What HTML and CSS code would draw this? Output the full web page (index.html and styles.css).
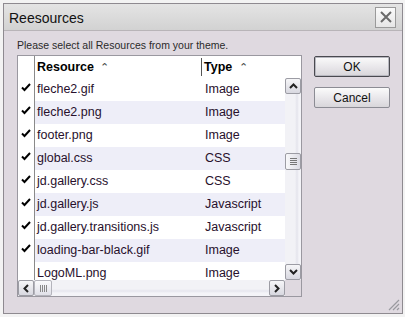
FILE: index.html
```html
<!DOCTYPE html>
<html lang="en">
<head>
    <meta charset="UTF-8">
    <title>Reesources</title>
    <link rel="stylesheet" href="styles.css">
</head>
<body>
    <div class="window">
        <div class="titlebar">
            <span class="title">Reesources</span>
            <button class="close-btn" aria-label="Close">
                <svg width="12" height="12" viewBox="0 0 12 12"><path d="M1 1 L11 11 M11 1 L1 11" stroke="#6a6a6a" stroke-width="2"/></svg>
            </button>
        </div>
        <div class="content">
            <p class="hint">Please select all Resources from your theme.</p>
            <div class="main">
                <div class="listbox">
                    <div class="list-header">
                        <div class="col-check"></div>
                        <div class="col-name">Resource <span class="sort">&#8963;</span></div>
                        <div class="col-type">Type <span class="sort">&#8963;</span></div>
                    </div>
                    <div class="list-body">
                        <div class="rows">
                            <div class="row"><div class="col-check"><svg class="tick" width="10" height="9" viewBox="0 0 10 9"><path d="M1 4.5 L3.5 7 L9 1" fill="none" stroke="#000" stroke-width="2"/></svg></div><div class="col-name">fleche2.gif</div><div class="col-type">Image</div></div>
                            <div class="row"><div class="col-check"><svg class="tick" width="10" height="9" viewBox="0 0 10 9"><path d="M1 4.5 L3.5 7 L9 1" fill="none" stroke="#000" stroke-width="2"/></svg></div><div class="col-name">fleche2.png</div><div class="col-type">Image</div></div>
                            <div class="row"><div class="col-check"><svg class="tick" width="10" height="9" viewBox="0 0 10 9"><path d="M1 4.5 L3.5 7 L9 1" fill="none" stroke="#000" stroke-width="2"/></svg></div><div class="col-name">footer.png</div><div class="col-type">Image</div></div>
                            <div class="row"><div class="col-check"><svg class="tick" width="10" height="9" viewBox="0 0 10 9"><path d="M1 4.5 L3.5 7 L9 1" fill="none" stroke="#000" stroke-width="2"/></svg></div><div class="col-name">global.css</div><div class="col-type">CSS</div></div>
                            <div class="row"><div class="col-check"><svg class="tick" width="10" height="9" viewBox="0 0 10 9"><path d="M1 4.5 L3.5 7 L9 1" fill="none" stroke="#000" stroke-width="2"/></svg></div><div class="col-name">jd.gallery.css</div><div class="col-type">CSS</div></div>
                            <div class="row"><div class="col-check"><svg class="tick" width="10" height="9" viewBox="0 0 10 9"><path d="M1 4.5 L3.5 7 L9 1" fill="none" stroke="#000" stroke-width="2"/></svg></div><div class="col-name">jd.gallery.js</div><div class="col-type">Javascript</div></div>
                            <div class="row"><div class="col-check"><svg class="tick" width="10" height="9" viewBox="0 0 10 9"><path d="M1 4.5 L3.5 7 L9 1" fill="none" stroke="#000" stroke-width="2"/></svg></div><div class="col-name">jd.gallery.transitions.js</div><div class="col-type">Javascript</div></div>
                            <div class="row"><div class="col-check"><svg class="tick" width="10" height="9" viewBox="0 0 10 9"><path d="M1 4.5 L3.5 7 L9 1" fill="none" stroke="#000" stroke-width="2"/></svg></div><div class="col-name">loading-bar-black.gif</div><div class="col-type">Image</div></div>
                            <div class="row"><div class="col-check"></div><div class="col-name">LogoML.png</div><div class="col-type">Image</div></div>
                        </div>
                        <div class="vscroll">
                            <div class="sb-btn">
                                <svg width="9" height="6" viewBox="0 0 9 6"><path d="M1 5 L4.5 1.5 L8 5" fill="none" stroke="#222" stroke-width="2"/></svg>
                            </div>
                            <div class="vtrack">
                                <div class="vthumb">
                                    <svg width="7" height="7" viewBox="0 0 7 7"><path d="M0 0.5 H7 M0 2.5 H7 M0 4.5 H7 M0 6.5 H7" stroke="#777" stroke-width="1"/></svg>
                                </div>
                            </div>
                            <div class="sb-btn">
                                <svg width="9" height="6" viewBox="0 0 9 6"><path d="M1 1 L4.5 4.5 L8 1" fill="none" stroke="#222" stroke-width="2"/></svg>
                            </div>
                        </div>
                    </div>
                    <div class="hscroll">
                        <div class="sb-btn">
                            <svg width="6" height="9" viewBox="0 0 6 9"><path d="M5 1 L1.5 4.5 L5 8" fill="none" stroke="#222" stroke-width="2"/></svg>
                        </div>
                        <div class="htrack">
                            <div class="hthumb">
                                <svg width="7" height="7" viewBox="0 0 7 7"><path d="M0.5 0 V7 M2.5 0 V7 M4.5 0 V7 M6.5 0 V7" stroke="#888" stroke-width="1"/></svg>
                            </div>
                        </div>
                        <div class="sb-btn">
                            <svg width="6" height="9" viewBox="0 0 6 9"><path d="M1 1 L4.5 4.5 L1 8" fill="none" stroke="#222" stroke-width="2"/></svg>
                        </div>
                        <div class="corner"></div>
                    </div>
                </div>
                <div class="actions">
                    <button class="btn btn-default">OK</button>
                    <button class="btn">Cancel</button>
                </div>
            </div>
            <svg class="grip" width="14" height="14" viewBox="0 0 14 14">
                <path d="M13 3 L3 13 M13 7 L7 13 M13 11 L11 13" stroke="#9a9aa0" stroke-width="1.2"/>
            </svg>
        </div>
    </div>
</body>
</html>
```

FILE: styles.css
```css
* {
    box-sizing: border-box;
    margin: 0;
    padding: 0;
}

body {
    background-color: #f3f3f3;
    font-family: "Liberation Sans", Arial, sans-serif;
    padding: 3px;
}

.window {
    width: 400px;
    height: 311px;
    border: 1px solid #8e8a90;
    background-color: #dfd9e0;
    display: flex;
    flex-direction: column;
}

.titlebar {
    height: 27px;
    display: flex;
    align-items: center;
    justify-content: space-between;
    padding: 0 6px 0 5px;
    background: linear-gradient(#e4e4e4, #d2d2d2);
    border-bottom: 1px solid #b8b4b8;
}

.title {
    font-size: 14px;
    color: #111;
    padding-top: 1px;
}

.close-btn {
    width: 21px;
    height: 21px;
    border: 1px solid #9a9a9a;
    background: linear-gradient(#fafafa, #e6e6e6);
    display: flex;
    align-items: center;
    justify-content: center;
}

.content {
    flex: 1;
    position: relative;
    padding: 8px 11px 0 13px;
}

.hint {
    font-size: 10.5px;
    color: #2a2a2a;
    height: 16px;
}

.main {
    display: flex;
    gap: 12px;
}

.listbox {
    width: 285px;
    height: 242px;
    border: 1px solid #9a98a0;
    background-color: #fff;
    display: flex;
    flex-direction: column;
}

.list-header {
    height: 22px;
    display: flex;
    align-items: center;
    font-size: 12.5px;
    font-weight: bold;
    color: #000;
}

.col-check {
    width: 17px;
    height: 100%;
    flex-shrink: 0;
    border-right: 1px solid #8a8a8a;
    display: flex;
    align-items: center;
    justify-content: center;
    padding-bottom: 4px;
}

.col-name {
    width: 167px;
    padding-left: 2px;
    flex-shrink: 0;
}

.list-header .col-name {
    border-right: 1px solid #555;
    height: 18px;
    line-height: 18px;
}

.col-type {
    padding-left: 2px;
}

.sort {
    font-weight: normal;
    font-size: 11px;
    color: #444;
    margin-left: 3px;
}

.list-body {
    height: 202px;
    display: flex;
}

.rows {
    flex: 1;
    overflow: hidden;
}

.row {
    height: 23px;
    display: flex;
    align-items: center;
    font-size: 12.5px;
    color: #28102c;
}

.row:nth-child(even) .col-name,
.row:nth-child(even) .col-type {
    background-color: #eeeef8;
}

.row .col-name,
.row .col-type {
    height: 100%;
    line-height: 23px;
}

.row .col-type {
    flex: 1;
    padding-left: 3px;
}

.vscroll {
    width: 16px;
    display: flex;
    flex-direction: column;
    background: linear-gradient(90deg, #f2f2f6 0, #f2f2f6 10px, #e4e4ec 12px, #f4f4f8 14px);
}

.sb-btn {
    width: 16px;
    height: 16px;
    flex-shrink: 0;
    border: 1px solid #9c9ca4;
    border-radius: 2px;
    background: linear-gradient(#f6f6f8, #d8d8e0);
    display: flex;
    align-items: center;
    justify-content: center;
}

.vtrack {
    flex: 1;
    padding-top: 59px;
}

.vthumb {
    width: 16px;
    height: 17px;
    border: 1px solid #9c9ca4;
    border-radius: 2px;
    background: linear-gradient(90deg, #f8f8fa, #dcdce4);
    display: flex;
    align-items: center;
    justify-content: center;
}

.hscroll {
    height: 16px;
    display: flex;
    background: linear-gradient(#f2f2f6 0, #f2f2f6 9px, #e6e6ee 11px, #f4f4f8 13px);
}

.htrack {
    flex: 1;
}

.hthumb {
    width: 18px;
    height: 16px;
    border: 1px solid #b4b4bc;
    border-radius: 2px;
    background: linear-gradient(#fafafc, #e0e0e8);
    display: flex;
    align-items: center;
    justify-content: center;
}

.corner {
    width: 16px;
    background-color: #dfd9e0;
}

.actions {
    display: flex;
    flex-direction: column;
    gap: 10px;
    padding-top: 1px;
}

.btn {
    width: 76px;
    height: 21px;
    font-family: "Liberation Sans", Arial, sans-serif;
    font-size: 12px;
    color: #111;
    border: 1px solid #8c8c94;
    border-radius: 2px;
    background: linear-gradient(#fbfbfb, #e6e4e8 60%, #d8d6da);
}

.btn-default {
    border: 1px solid #4a4a50;
    box-shadow: inset 0 0 0 1px #b8b8c0;
}

.grip {
    position: absolute;
    right: 2px;
    bottom: 2px;
}
```
